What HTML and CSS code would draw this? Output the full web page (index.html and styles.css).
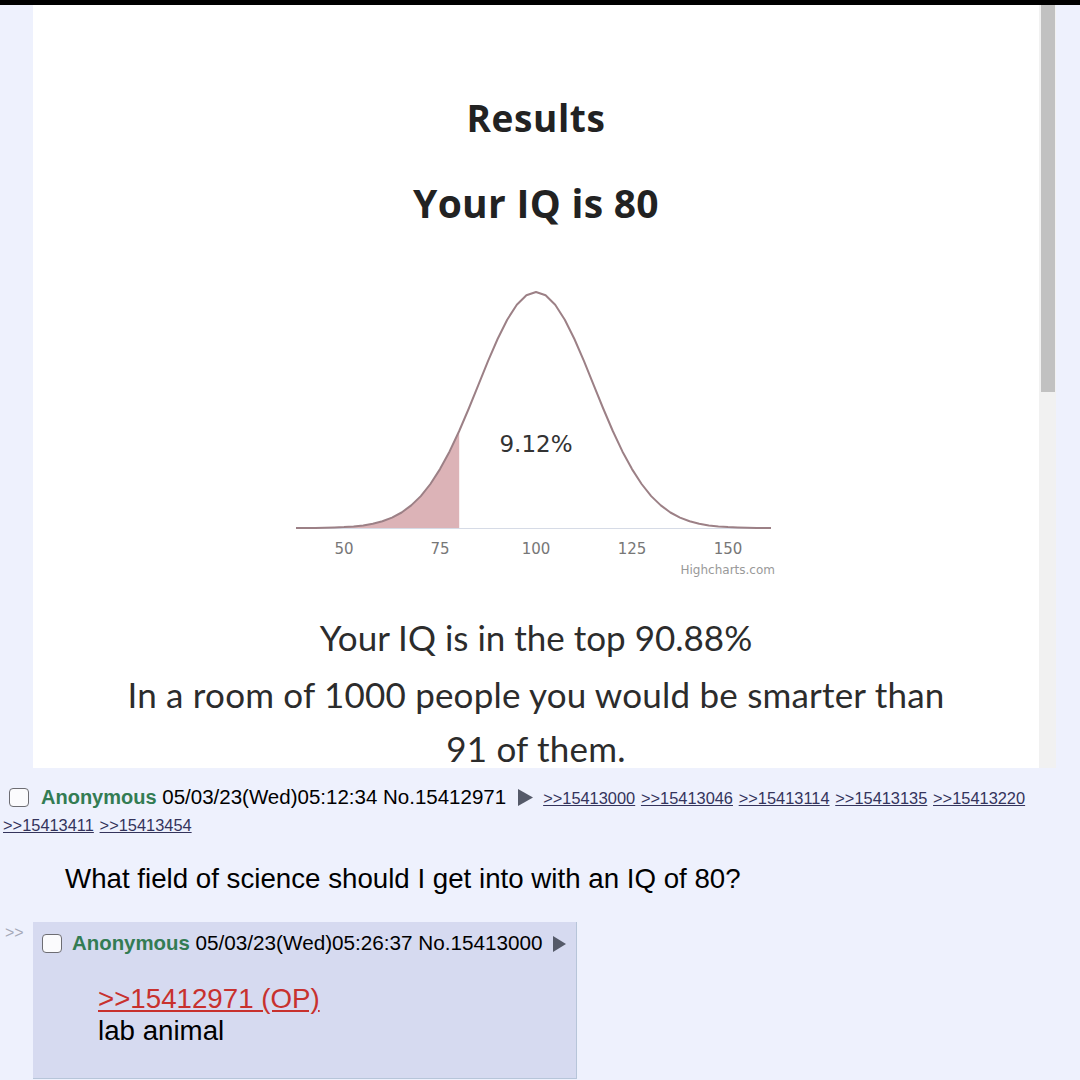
FILE: index.html
```html
<!DOCTYPE html>
<html>
<head>
<meta charset="utf-8">
<link rel="stylesheet" href="styles.css">
</head>
<body>
<div class="topbar"></div>
<div class="shot">
  <div class="gutter"></div>
  <div class="panel">
    <h1 class="title">Results</h1>
    <h2 class="score">Your IQ is 80</h2>
    <svg class="chart" width="500" height="300" viewBox="0 0 500 300">
      <path class="shade" d="M10,248 L29.2,248 38.8,247.7 48.4,247.5 58,247.1 67.6,246.4 77.2,245.4 86.8,243.7 96.4,241.3 106,237.6 115.6,232.5 125.2,225.4 134.8,216.1 144.4,204 154,189.1 163.6,171.4 173.2,151 L173.2,248 Z"/>
      <line class="axis" x1="10" y1="248.5" x2="485" y2="248.5"/>
      <path class="curve" d="M10,248 L29.2,248 38.8,247.7 48.4,247.5 58,247.1 67.6,246.4 77.2,245.4 86.8,243.7 96.4,241.3 106,237.6 115.6,232.5 125.2,225.4 134.8,216.1 144.4,204 154,189.1 163.6,171.4 173.2,151 182.8,128.5 192.4,104.9 202,81.2 211.6,59 221.2,39.7 230.8,24.7 240.4,15.3 250,12 259.6,15.3 269.2,24.7 278.8,39.7 288.4,59 298,81.2 307.6,104.9 317.2,128.5 326.8,151 336.4,171.4 346,189.1 355.6,204 365.2,216.1 374.8,225.4 384.4,232.5 394,237.6 403.6,241.3 413.2,243.7 422.8,245.4 432.4,246.4 442,247.1 451.6,247.5 461.2,247.7 470.8,248 485,248"/>
      <text class="pct" x="250" y="172" text-anchor="middle">9.12%</text>
      <text class="tick" x="58" y="274" text-anchor="middle">50</text>
      <text class="tick" x="154" y="274" text-anchor="middle">75</text>
      <text class="tick" x="250" y="274" text-anchor="middle">100</text>
      <text class="tick" x="346" y="274" text-anchor="middle">125</text>
      <text class="tick" x="442" y="274" text-anchor="middle">150</text>
      <text class="credit" x="489" y="294" text-anchor="end">Highcharts.com</text>
    </svg>
    <p class="stat first">Your IQ is in the top 90.88%</p>
    <p class="stat second">In a room of 1000 people you would be smarter than <span class="tail">91 of them.</span></p>
  </div>
  <div class="scrollbar"><div class="thumb"></div></div>
</div>

<div class="op">
  <div class="postinfo"><span class="cb cb-op"></span><span class="name">Anonymous</span> <span class="date">05/03/23(Wed)05:12:34</span> <span class="num">No.15412971</span><svg class="arrow" width="15" height="17" viewBox="0 0 15 17"><path d="M0,0 L15,8.5 L0,17 Z"/></svg><a class="backlink" href="#">&gt;&gt;15413000</a> <a class="backlink" href="#">&gt;&gt;15413046</a> <a class="backlink" href="#">&gt;&gt;15413114</a> <a class="backlink" href="#">&gt;&gt;15413135</a> <a class="backlink" href="#">&gt;&gt;15413220</a> <a class="backlink" href="#">&gt;&gt;15413411</a> <a class="backlink" href="#">&gt;&gt;15413454</a></div>
  <blockquote class="msg op-msg">What field of science should I get into with an IQ of 80?</blockquote>
</div>

<div class="replyrow">
  <div class="side">&gt;&gt;</div>
  <div class="reply">
    <div class="postinfo"><span class="cb cb-reply"></span><span class="name">Anonymous</span> <span class="date">05/03/23(Wed)05:26:37</span> <span class="num">No.15413000</span><svg class="arrow small" width="13" height="16" viewBox="0 0 13 16"><path d="M0,0 L13,8 L0,16 Z"/></svg></div>
    <blockquote class="msg reply-msg"><a class="quotelink" href="#">&gt;&gt;15412971 (OP)</a><br>lab animal</blockquote>
  </div>
</div>
</body>
</html>
```

FILE: styles.css
```css
* { box-sizing: border-box; }

body {
  margin: 0;
  width: 1080px;
  height: 1080px;
  overflow: hidden;
  background: #eef1fd;
  font-family: "Liberation Sans", Arial, sans-serif;
  color: #000;
}

.topbar {
  height: 5px;
  background: #000;
}

.shot {
  display: flex;
  height: 763px;
}

.gutter {
  width: 33px;
  flex: none;
}

.panel {
  width: 1006px;
  flex: none;
  background: #fff;
  display: flex;
  flex-direction: column;
  align-items: center;
  overflow: hidden;
  padding-top: 91px;
  color: #222;
  text-align: center;
}

.panel > * { flex: none; }

.title {
  margin: 0;
  font-family: "Open Sans", sans-serif;
  font-weight: 700;
  font-size: 37px;
  line-height: 44px;
  letter-spacing: 0.6px;
}

.score {
  margin: 40px 0 0;
  font-family: "Open Sans", sans-serif;
  font-weight: 700;
  font-size: 39px;
  line-height: 46px;
  letter-spacing: 0.3px;
}

.chart {
  display: block;
  margin-top: 54px;
}

.shade { fill: #dcb3b7; }
.axis { stroke: #d6dbe6; stroke-width: 1; }
.curve { fill: none; stroke: #9c8086; stroke-width: 2; stroke-linejoin: round; }
.pct { font-family: "DejaVu Sans", sans-serif; font-size: 23px; fill: #333; }
.tick { font-family: "DejaVu Sans", sans-serif; font-size: 15px; fill: #777; }
.credit { font-family: "DejaVu Sans", sans-serif; font-size: 12px; fill: #999; }

.stat {
  margin: 0;
  font-family: "Lato", sans-serif;
  font-weight: 400;
  font-size: 35px;
  color: #2c2c2c;
}

.stat.first {
  margin-top: 29px;
  line-height: 56px;
}

.stat.second {
  line-height: 58px;
  letter-spacing: 0.2px;
}

.tail {
  display: block;
  margin-top: 5px;
  line-height: 40px;
}

.scrollbar {
  width: 17px;
  flex: none;
  background: #f1f1f1;
  padding-left: 2px;
}

.thumb {
  width: 14px;
  height: 387px;
  background: #c1c1c1;
}

.op {
  padding-left: 3px;
}

.postinfo {
  font-size: 20.5px;
  line-height: 25px;
}

.op .postinfo { margin-top: 16px; }

.cb {
  display: inline-block;
  width: 20px;
  height: 19px;
  border: 1.5px solid #6d6d73;
  border-radius: 4px;
  background: #fbfbfd;
  vertical-align: -3px;
}

.cb-op { margin: 0 12px 0 6px; }
.cb-reply { margin: 0 10px 0 0; }

.name {
  color: #337c53;
  font-weight: 700;
  font-size: 20px;
}

.arrow {
  fill: #555a69;
  margin: 0 10px 0 12px;
  vertical-align: -2px;
}

.arrow.small { margin: 0 0 0 10px; }

.backlink {
  font-size: 16.4px;
  color: #34345c;
  text-decoration: underline;
}

.msg {
  font-size: 27.7px;
  line-height: 32px;
}

.op-msg {
  margin: 25px 0 0 62px;
}

.replyrow {
  display: flex;
  align-items: flex-start;
  margin-top: 27px;
}

.side {
  width: 33px;
  flex: none;
  padding: 2px 0 0 5px;
  font-size: 16px;
  line-height: 18px;
  color: #a6a9b8;
}

.reply {
  background: #d6daf0;
  border-right: 1px solid #b7c5d9;
  border-bottom: 1px solid #b7c5d9;
  padding: 9px 10px 31px 9px;
}

.reply .postinfo {
  line-height: 24px;
  font-size: 20.7px;
}

.reply .name { font-size: 20.4px; }

.reply-msg {
  margin: 28px 0 0 56px;
}

.quotelink {
  color: #c8312e;
  text-decoration: underline;
}
```
